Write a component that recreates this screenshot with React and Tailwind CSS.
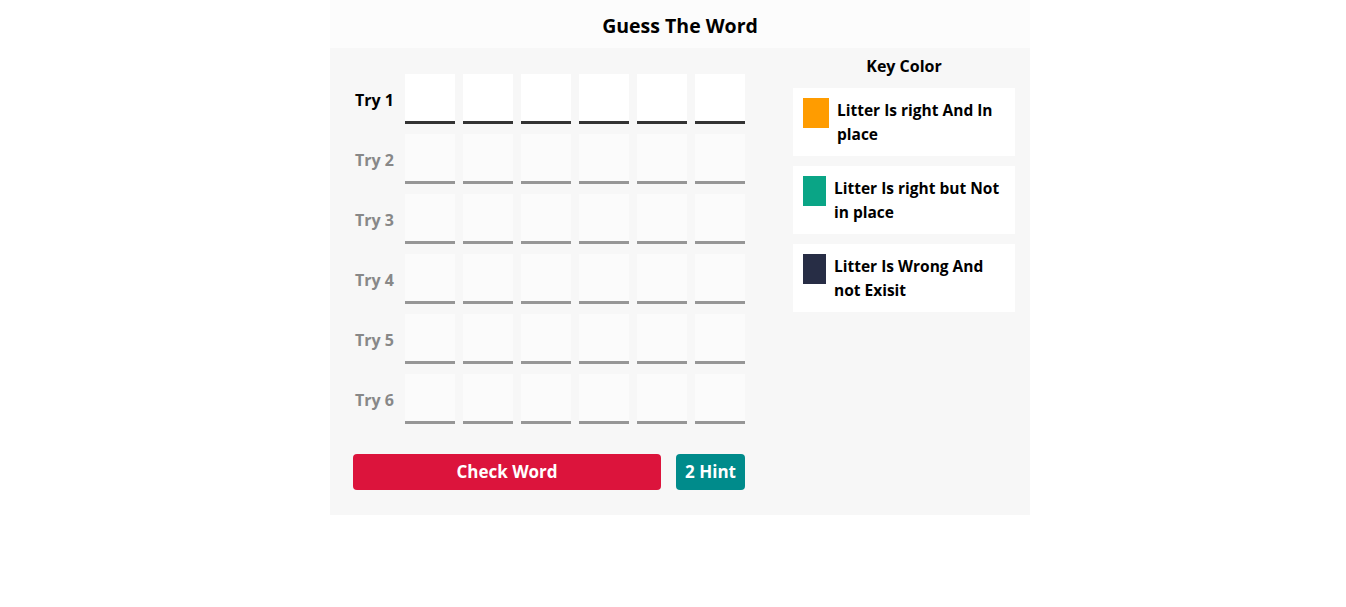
const rows = [1, 2, 3, 4, 5, 6]

const keys = [
  { color: 'bg-[#ff9c00]', w: 'w-[26px]', text: 'Litter Is right And In place' },
  { color: 'bg-[#0aa586]', w: 'w-[23px]', text: 'Litter Is right but Not in place' },
  { color: 'bg-[#272d45]', w: 'w-[23px]', text: 'Litter Is Wrong And not Exisit' },
]

export default function App() {
  return (
    <div className="min-h-screen bg-white pl-[14px] font-['Open_Sans',sans-serif]">
      <div className="w-[700px] mx-auto">
        <div className="h-[48px] bg-[#fcfcfc] flex items-center justify-center pt-[3px]">
          <h1 className="text-[19.5px] font-bold text-black">Guess The Word</h1>
        </div>

        <div className="bg-[#f7f7f7] flex pb-[25px]">
          {/* Game area */}
          <div className="pl-[23px] pt-[26px] w-[392px] box-content">
            <div className="flex flex-col gap-[10px]">
              {rows.map(n => (
                <div key={n} className="flex items-center">
                  <span className={`w-[52px] pl-[2px] pt-[2px] text-[16px] font-bold ${n === 1 ? 'text-black' : 'text-[#888]'}`}>
                    Try {n}
                  </span>
                  <div className="flex gap-[8px]">
                    {[0, 1, 2, 3, 4, 5].map(i => (
                      <div
                        key={i}
                        className={`w-[50px] h-[50px] border-b-[3px] ${n === 1 ? 'bg-white border-[#333]' : 'bg-[#fbfbfb] border-[#969696]'}`}
                      />
                    ))}
                  </div>
                </div>
              ))}
            </div>

            <div className="flex gap-[15px] mt-[30px]">
              <button className="flex-1 h-[36px] rounded-[4px] bg-[#dc143c] text-white text-[17px] font-bold">
                Check Word
              </button>
              <button className="w-[69px] h-[36px] rounded-[4px] bg-[#008b8b] text-white text-[17px] font-bold">
                2 Hint
              </button>
            </div>
          </div>

          {/* Key colors */}
          <div className="ml-[48px] w-[222px] pt-[7px]">
            <h2 className="text-center text-[16px] leading-[22px] font-bold text-black mb-[11px]">Key Color</h2>
            <div className="flex flex-col gap-[10px]">
              {keys.map((k, i) => (
                <div key={i} className="bg-white h-[68px] p-[10px] flex items-start">
                  <div className={`${k.w} h-[30px] shrink-0 ${k.color}`} />
                  <p className="ml-[8px] text-[15.5px] leading-[24px] font-bold text-black">{k.text}</p>
                </div>
              ))}
            </div>
          </div>
        </div>
      </div>
    </div>
  )
}
